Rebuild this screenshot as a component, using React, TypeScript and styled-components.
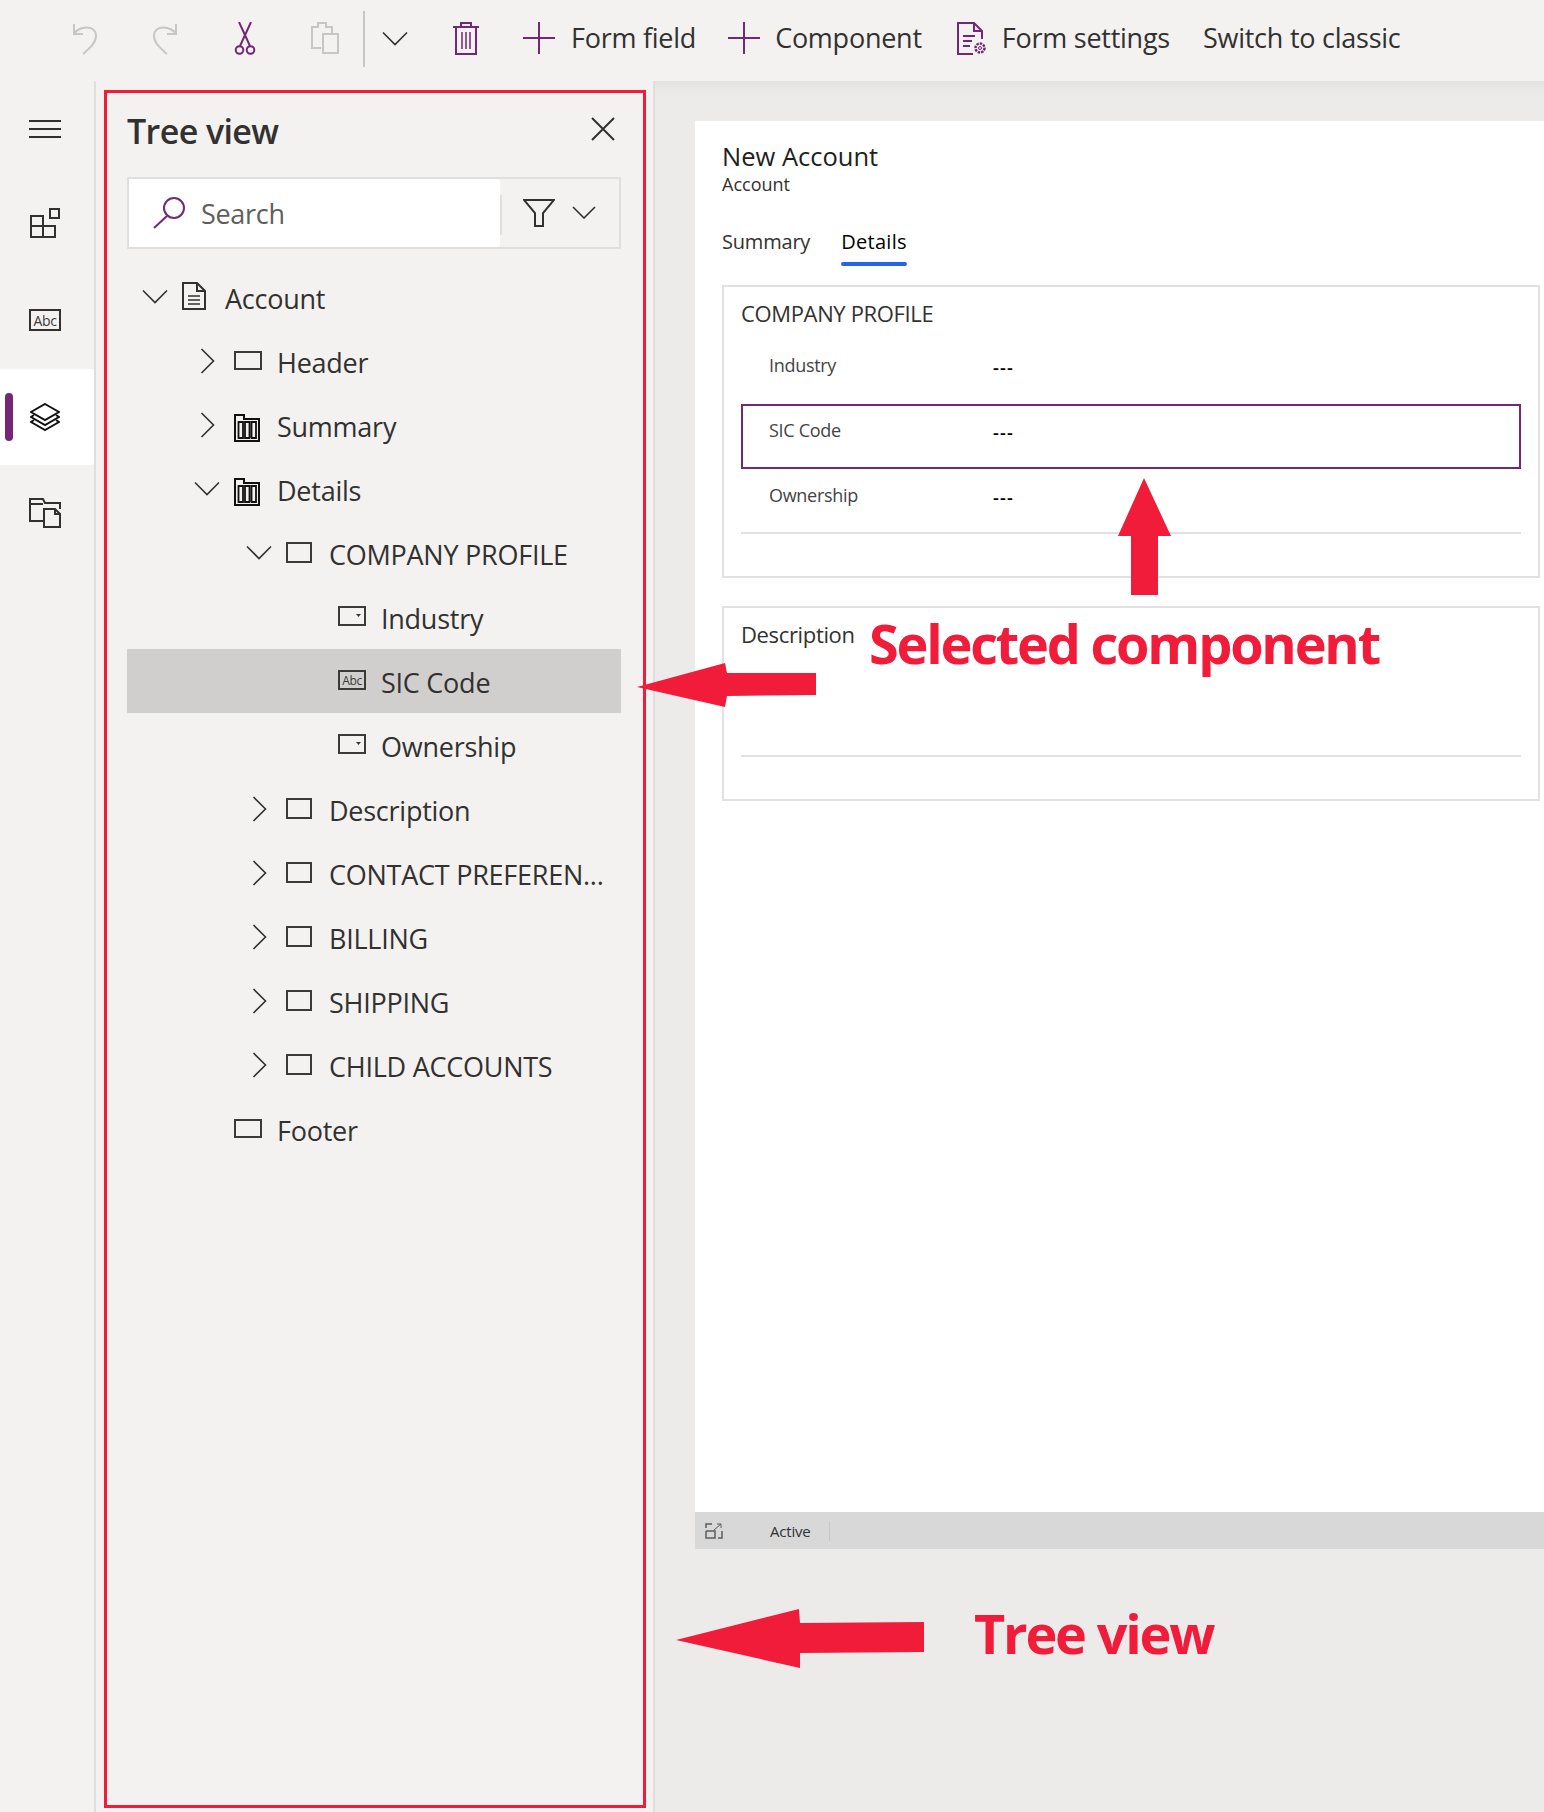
import React from 'react';
import styled, { createGlobalStyle } from 'styled-components';

const PURPLE = '#742774';
const DARK = '#323130';
const MUTED = '#c8c6c4';
const RED = '#f01c3a';
const FONT = `'Open Sans', 'Noto Sans', sans-serif`;

const GlobalStyle = createGlobalStyle`
    html, body {
        margin: 0;
        padding: 0;
        background: #edebe9;
    }
    * {
        box-sizing: border-box;
    }
    body {
        font-family: ${FONT};
        color: ${DARK};
    }
`;

const Page = styled.div`
    position: relative;
    width: 1544px;
    height: 1812px;
    overflow: hidden;
    display: flex;
    flex-direction: column;
`;

const Toolbar = styled.div`
    height: 81px;
    flex: none;
    display: flex;
    align-items: center;
    padding-left: 45px;
    background: #f3f2f1;
    padding-bottom: 5px;
`;

const ToolIcon = styled.div<{ $w: number }>`
    width: ${(p) => p.$w}px;
    height: 34px;
    display: flex;
    align-items: center;
    justify-content: center;
`;

const ToolDivider = styled.div`
    width: 2px;
    height: 56px;
    margin-top: 2px;
    margin-left: -2px;
    background: #c8c6c4;
`;

const ToolButton = styled.div<{ $left: number; $gap: number }>`
    display: flex;
    align-items: center;
    gap: ${(p) => p.$gap}px;
    margin-left: ${(p) => p.$left}px;
    font-size: 27px;
    letter-spacing: -0.25px;
    line-height: 34px;
    white-space: nowrap;
`;

const Body = styled.div`
    flex: 1;
    display: flex;
    min-height: 0;
`;

const Rail = styled.nav`
    width: 96px;
    flex: none;
    background: #f3f2f1;
    border-right: 2px solid #e1dfdd;
`;

const RailItem = styled.div<{ $active?: boolean; $up?: number }>`
    position: relative;
    width: 94px;
    height: 96px;
    display: flex;
    align-items: center;
    justify-content: center;
    padding: 0 4px ${(p) => p.$up ?? 0}px 0;
    background: ${(p) => (p.$active ? '#ffffff' : 'transparent')};
    border-radius: 0 3px 3px 0;

    ${(p) =>
        p.$active &&
        `
        &::before {
            content: '';
            position: absolute;
            left: 5px;
            top: 24px;
            width: 8px;
            height: 48px;
            border-radius: 4px;
            background: ${PURPLE};
        }
    `}
`;

const TreePanel = styled.aside`
    width: 559px;
    flex: none;
    padding: 9px 7px 4px 8px;
    background: #f3f2f1;
    border-right: 2px solid #e1dfdd;
`;

const TreeFrame = styled.div`
    height: 100%;
    border: 3px solid ${RED};
    padding: 0 22px 0 20px;
`;

const PanelHeader = styled.div`
    height: 84px;
    display: flex;
    align-items: center;
    justify-content: space-between;
    padding: 0 6px 8px 0;
`;

const PanelTitle = styled.h2`
    margin: 0;
    font-size: 34px;
    font-weight: 600;
    letter-spacing: -0.6px;
`;

const CloseSlot = styled.div`
    display: flex;
    margin-bottom: 5px;
`;

const SearchBar = styled.div`
    height: 72px;
    display: flex;
    border: 2px solid #e1dfdd;
`;

const SearchInput = styled.div`
    width: 371px;
    display: flex;
    align-items: center;
    gap: 15px;
    padding-left: 24px;
    background: #ffffff;
    border-radius: 0 3px 3px 0;
    font-size: 27px;
    letter-spacing: -0.3px;
    color: #605e5c;
`;

const FilterSlot = styled.div`
    position: relative;
    flex: 1;
    display: flex;
    align-items: center;
    gap: 17px;
    padding-left: 23px;
    padding-bottom: 1px;

    &::before {
        content: '';
        position: absolute;
        left: 0;
        top: 16px;
        bottom: 12px;
        width: 2px;
        background: #e1dfdd;
    }
`;

const TreeList = styled.ul`
    list-style: none;
    margin: 16px 0 0;
    padding: 0;
`;

const TreeRow = styled.li<{ $level: number; $selected?: boolean }>`
    height: 64px;
    display: flex;
    align-items: center;
    padding: 3px 0 0 ${(p) => p.$level * 52 + 14}px;
    background: ${(p) => (p.$selected ? '#d0cfcd' : 'transparent')};
    font-size: 27px;
    letter-spacing: -0.25px;
    white-space: nowrap;
`;

const Caret = styled.div`
    width: 28px;
    height: 32px;
    margin-right: 13px;
    margin-bottom: 4px;
    display: flex;
    align-items: center;
    justify-content: center;
`;

const NodeIcon = styled.div`
    width: 43px;
    margin-bottom: 5px;
    display: flex;
    align-items: center;
`;

const Canvas = styled.main`
    flex: 1;
    padding: 40px 0 0 40px;
    background: linear-gradient(#e4e3e1, #edebe9 14px);
    display: flex;
    flex-direction: column;
    height: 100%;
`;

const Form = styled.div`
    height: 1391px;
    padding: 0 4px 0 27px;
    background: #ffffff;
    display: flex;
    flex-direction: column;
`;

const FormTitle = styled.h1`
    margin: 18px 0 0;
    font-size: 25.5px;
    line-height: 34px;
    font-weight: 500;
    letter-spacing: 0;
    color: #201f1e;
`;

const FormSubtitle = styled.div`
    font-size: 18px;
    line-height: 22px;
    font-weight: 400;
`;

const Tabs = styled.div`
    display: flex;
    gap: 31px;
    margin-top: 33px;
    height: 57px;
`;

const Tab = styled.div<{ $active?: boolean }>`
    position: relative;
    font-size: 20px;
    line-height: 28px;
    letter-spacing: ${(p) => (p.$active ? '0.3px' : '-0.2px')};
    color: ${(p) => (p.$active ? '#000000' : DARK)};

    ${(p) =>
        p.$active &&
        `
        &::after {
            content: '';
            position: absolute;
            left: 0;
            right: 0;
            top: 34px;
            height: 4px;
            border-radius: 2px;
            background: #2266e3;
        }
    `}
`;

const Section = styled.section<{ $height: number; $gap?: number }>`
    height: ${(p) => p.$height}px;
    margin-top: ${(p) => p.$gap ?? 0}px;
    padding: 0 17px;
    border: 2px solid #e1e1e1;
`;

const SectionTitle = styled.div`
    height: 52px;
    padding-top: 12px;
    font-size: 22px;
    line-height: 28px;
    letter-spacing: -0.35px;
`;

const SectionSpacer = styled.div`
    height: 97px;
`;

const FieldRow = styled.div<{ $selected?: boolean }>`
    height: 65px;
    display: flex;
    padding: ${(p) => (p.$selected ? '12px 0 0 26px' : '14px 0 0 28px')};
    border: ${(p) => (p.$selected ? `2px solid ${PURPLE}` : 'none')};
    font-size: 18px;
    line-height: 24px;
    letter-spacing: -0.3px;
    color: #444444;
`;

const FieldLabel = styled.div`
    width: 224px;
    flex: none;
`;

const FieldValue = styled.div`
    padding-top: 2px;
    font-weight: 600;
    letter-spacing: 1.2px;
    color: #000000;
`;

const SectionLine = styled.div`
    height: 2px;
    margin-top: -2px;
    background: #e1e1e1;
`;

const StatusBar = styled.div`
    height: 37px;
    flex: none;
    display: flex;
    align-items: center;
    padding-left: 10px;
    background: #d8d8d8;
    font-size: 15px;
    letter-spacing: -0.2px;
`;

const StatusText = styled.span`
    margin-left: 47px;
    padding-right: 18px;
    height: 20px;
    line-height: 20px;
    border-right: 1px solid #c6c6c6;
`;

const Callout = styled.div<{ $x: number; $y: number; $size: number }>`
    position: absolute;
    left: ${(p) => p.$x}px;
    top: ${(p) => p.$y}px;
    font-size: ${(p) => p.$size}px;
    line-height: 1;
    font-weight: 700;
    letter-spacing: -2.2px;
    color: ${RED};
    white-space: nowrap;
`;

const ArrowLayer = styled.svg`
    position: absolute;
    left: 0;
    top: 0;
    pointer-events: none;
`;

const TabSvg = styled.svg`
    margin-top: 7px;
`;

const Line = ({ d, w, h, color = DARK, sw = 2 }: { d: string; w: number; h: number; color?: string; sw?: number }) => (
    <svg width={w} height={h} viewBox={`0 0 ${w} ${h}`} fill="none" stroke={color} strokeWidth={sw}>
        <path d={d} />
    </svg>
);

const ChevronDown = () => <Line w={26} h={15} sw={1.6} d="M1 1.5 L13 13.5 L25 1.5" />;
const ChevronRight = () => <Line w={15} h={26} sw={1.6} d="M1.5 1 L13.5 13 L1.5 25" />;

const RectIcon = ({ w, h }: { w: number; h: number }) => (
    <Line w={w} h={h} color="#3b3a39" d={`M1 1 H${w - 1} V${h - 1} H1 Z`} />
);

const DocIcon = () => (
    <svg width={24} height={28} viewBox="0 0 24 28" fill="none" stroke={DARK} strokeWidth={2}>
        <path d="M1 1 H15 L23 9 V27 H1 Z M15 1 V9 H23" />
        <path d="M6 14 H18 M6 18 H18 M6 22 H18" strokeWidth={1.5} />
    </svg>
);

const TabIcon = () => (
    <TabSvg width={26} height={28} viewBox="0 0 26 28" fill="none" stroke="#111111" strokeWidth={2}>
        <path d="M1 27 V1 H10 V5 H25 V27 Z" />
        <path d="M4.5 8 H9 V24 H4.5 Z M11 8 H15.5 V24 H11 Z M17.5 8 H22 V24 H17.5 Z" strokeWidth={1.8} />
    </TabSvg>
);

const DropdownIcon = () => (
    <svg width={28} height={20} viewBox="0 0 28 20" fill="none" stroke="#3b3a39" strokeWidth={2}>
        <path d="M1 1 H27 V19 H1 Z" />
        <path d="M18 8 H23 L20.5 11 Z" fill="#3b3a39" stroke="none" />
    </svg>
);

const AbcBox = styled.div<{ $w: number; $h: number; $size: number; $border: string }>`
    width: ${(p) => p.$w}px;
    height: ${(p) => p.$h}px;
    border: 2px solid ${(p) => p.$border};
    display: flex;
    align-items: center;
    justify-content: center;
    font-size: ${(p) => p.$size}px;
    letter-spacing: -0.4px;
    color: #3b3a39;
`;

const Plus = () => <Line w={32} h={32} color={PURPLE} d="M0 16 H32 M16 0 V32" />;

type Node = {
    label: string;
    level: number;
    caret?: 'down' | 'right';
    icon: 'doc' | 'wide' | 'tab' | 'box' | 'drop' | 'abc';
    selected?: boolean;
};

const treeNodes: Node[] = [
    { label: 'Account', level: 0, caret: 'down', icon: 'doc' },
    { label: 'Header', level: 1, caret: 'right', icon: 'wide' },
    { label: 'Summary', level: 1, caret: 'right', icon: 'tab' },
    { label: 'Details', level: 1, caret: 'down', icon: 'tab' },
    { label: 'COMPANY PROFILE', level: 2, caret: 'down', icon: 'box' },
    { label: 'Industry', level: 3, icon: 'drop' },
    { label: 'SIC Code', level: 3, icon: 'abc', selected: true },
    { label: 'Ownership', level: 3, icon: 'drop' },
    { label: 'Description', level: 2, caret: 'right', icon: 'box' },
    { label: 'CONTACT PREFEREN...', level: 2, caret: 'right', icon: 'box' },
    { label: 'BILLING', level: 2, caret: 'right', icon: 'box' },
    { label: 'SHIPPING', level: 2, caret: 'right', icon: 'box' },
    { label: 'CHILD ACCOUNTS', level: 2, caret: 'right', icon: 'box' },
    { label: 'Footer', level: 1, icon: 'wide' },
];

const renderNodeIcon = (icon: Node['icon']) => {
    switch (icon) {
        case 'doc':
            return <DocIcon />;
        case 'wide':
            return <RectIcon w={28} h={19} />;
        case 'tab':
            return <TabIcon />;
        case 'box':
            return <RectIcon w={26} h={21} />;
        case 'drop':
            return <DropdownIcon />;
        case 'abc':
            return (
                <AbcBox $w={28} $h={20} $size={12} $border="#3b3a39">
                    Abc
                </AbcBox>
            );
    }
};

const fields = ['Industry', 'SIC Code', 'Ownership'];

export default function App() {
    return (
        <Page>
            <GlobalStyle />
            <Toolbar>
                <ToolIcon $w={80}>
                    <Line w={26} h={33} color={MUTED} d="M2 2 V12 H11 M2 12 C6 4 24 2 24 14 C24 21 18 26 11 32" />
                </ToolIcon>
                <ToolIcon $w={80}>
                    <Line w={26} h={33} color={MUTED} d="M24 2 V12 H15 M24 12 C20 4 2 2 2 14 C2 21 8 26 15 32" />
                </ToolIcon>
                <ToolIcon $w={80}>
                    <svg width={22} height={33} viewBox="0 0 22 33" fill="none" stroke={PURPLE} strokeWidth={2}>
                        <path d="M5 0 L16 24 M17 0 L6 24" />
                        <circle cx={5.5} cy={28} r={3.8} />
                        <circle cx={16.5} cy={28} r={3.8} />
                    </svg>
                </ToolIcon>
                <ToolIcon $w={80}>
                    <svg width={28} height={33} viewBox="0 0 28 33" fill="none" stroke={MUTED} strokeWidth={2}>
                        <path d="M10 26 H1 V5 H7 V1 H15 V5 H21 V11" />
                        <path d="M12 12 H27 V31 H12 Z" />
                    </svg>
                </ToolIcon>
                <ToolDivider />
                <ToolIcon $w={59}>
                    <ChevronDown />
                </ToolIcon>
                <ToolIcon $w={84}>
                    <svg width={26} height={33} viewBox="0 0 26 33" fill="none" stroke={PURPLE} strokeWidth={2}>
                        <path d="M0 5 H26 M8 5 V1 H18 V5 M3 5 V32 H23 V5" />
                        <path d="M9 10 V27 M13 10 V27 M17 10 V27" strokeWidth={1.5} />
                    </svg>
                </ToolIcon>
                <ToolButton $left={15} $gap={16}>
                    <Plus />
                    Form field
                </ToolButton>
                <ToolButton $left={32} $gap={15}>
                    <Plus />
                    Component
                </ToolButton>
                <ToolButton $left={35} $gap={15}>
                    <svg width={30} height={33} viewBox="0 0 30 33" fill="none" stroke={PURPLE} strokeWidth={2}>
                        <path d="M16 32 H1 V1 H17 L25 9 V17 M17 1 V9 H25" />
                        <path d="M6 14 H18 M6 19 H15 M6 24 H13" />
                        <circle cx={23} cy={26} r={4.5} strokeWidth={2.5} strokeDasharray="2.4 1" />
                        <circle cx={23} cy={26} r={1.5} strokeWidth={1} />
                    </svg>
                    Form settings
                </ToolButton>
                <ToolButton $left={33} $gap={0}>
                    Switch to classic
                </ToolButton>
            </Toolbar>
            <Body>
                <Rail>
                    <RailItem>
                        <Line w={32} h={18} d="M0 1 H32 M0 9 H32 M0 17 H32" />
                    </RailItem>
                    <RailItem $up={4}>
                        <svg width={30} height={30} viewBox="0 0 30 30" fill="none" stroke={DARK} strokeWidth={2}>
                            <path d="M1 8 H13 V29 H1 Z M1 18 H25 V29 H13" />
                            <path d="M25 18 V29 M13 8 V18" />
                            <path d="M20 1 H29 V10 H20 Z" />
                        </svg>
                    </RailItem>
                    <RailItem $up={2}>
                        <AbcBox $w={32} $h={22} $size={14} $border={DARK}>
                            Abc
                        </AbcBox>
                    </RailItem>
                    <RailItem $active>
                        <svg width={30} height={28} viewBox="0 0 30 28" fill="none" stroke="#111111" strokeWidth={2}>
                            <path d="M15 1 L29 9 L15 17 L1 9 Z" />
                            <path d="M4 12 L1 14 L15 22 L29 14 L26 12" />
                            <path d="M4 17 L1 19 L15 27 L29 19 L26 17" />
                        </svg>
                    </RailItem>
                    <RailItem>
                        <svg width={32} height={30} viewBox="0 0 32 30" fill="none" stroke={DARK} strokeWidth={2}>
                            <path d="M14 23 H1 V1 H14 L16 5 H31 V11" />
                            <path d="M1 6 H14" />
                            <path d="M15 11 H26 L31 16 V29 H15 Z M26 11 V16 H31" />
                        </svg>
                    </RailItem>
                </Rail>
                <TreePanel>
                    <TreeFrame>
                        <PanelHeader>
                            <PanelTitle>Tree view</PanelTitle>
                            <CloseSlot>
                                <Line w={24} h={24} d="M1 1 L23 23 M23 1 L1 23" />
                            </CloseSlot>
                        </PanelHeader>
                        <SearchBar>
                            <SearchInput>
                                <svg width={33} height={32} viewBox="0 0 33 32" fill="none" stroke={PURPLE} strokeWidth={2}>
                                    <circle cx={21} cy={11} r={10} />
                                    <path d="M14 19 L1 31" />
                                </svg>
                                Search
                            </SearchInput>
                            <FilterSlot>
                                <Line w={32} h={28} d="M1 1 H31 L20 14 V27 H12 V14 Z" />
                                <Line w={24} h={13} sw={1.6} d="M1 1 L12 12 L23 1" />
                            </FilterSlot>
                        </SearchBar>
                        <TreeList>
                            {treeNodes.map((node) => (
                                <TreeRow key={node.label} $level={node.level} $selected={node.selected}>
                                    <Caret>
                                        {node.caret === 'down' && <ChevronDown />}
                                        {node.caret === 'right' && <ChevronRight />}
                                    </Caret>
                                    <NodeIcon>{renderNodeIcon(node.icon)}</NodeIcon>
                                    {node.label}
                                </TreeRow>
                            ))}
                        </TreeList>
                    </TreeFrame>
                </TreePanel>
                <Canvas>
                    <Form>
                        <FormTitle>New Account</FormTitle>
                        <FormSubtitle>Account</FormSubtitle>
                        <Tabs>
                            <Tab>Summary</Tab>
                            <Tab $active>Details</Tab>
                        </Tabs>
                        <Section $height={293}>
                            <SectionTitle>COMPANY PROFILE</SectionTitle>
                            {fields.map((field) => (
                                <FieldRow key={field} $selected={field === 'SIC Code'}>
                                    <FieldLabel>{field}</FieldLabel>
                                    <FieldValue>---</FieldValue>
                                </FieldRow>
                            ))}
                            <SectionLine />
                        </Section>
                        <Section $height={195} $gap={28}>
                            <SectionTitle>Description</SectionTitle>
                            <SectionSpacer />
                            <SectionLine />
                        </Section>
                    </Form>
                    <StatusBar>
                        <svg width={18} height={16} viewBox="0 0 18 16" fill="none" stroke="#5c5c5c" strokeWidth={1.5}>
                            <path d="M1 8 V15 H10 V8 H1 M1 5 V1 H7 M17 8 V15 H13" />
                            <path d="M9 7 L16 1 M12 1 H16 V5" strokeWidth={1} />
                        </svg>
                        <StatusText>Active</StatusText>
                    </StatusBar>
                </Canvas>
            </Body>

            <ArrowLayer width={1544} height={1812} fill={RED}>
                <polygon points="1144,478 1171,536 1158,536 1158,595 1131,595 1131,536 1118,536" />
                <polygon points="637,687 725,663 727,673 816,673 816,695 727,696 725,707" />
                <polygon points="676,1640 799,1609 800,1623 924,1622 924,1652 800,1653 800,1668" />
            </ArrowLayer>
            <Callout $x={869} $y={616} $size={54}>
                Selected component
            </Callout>
            <Callout $x={974} $y={1606} $size={54}>
                Tree view
            </Callout>
        </Page>
    );
}
